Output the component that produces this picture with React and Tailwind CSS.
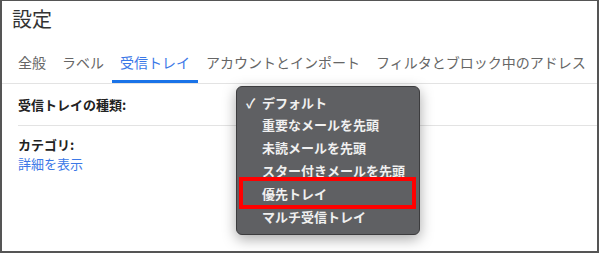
const tabs = ['全般', 'ラベル', '受信トレイ', 'アカウントとインポート', 'フィルタとブロック中のアドレス']

const menuItems = [
  { label: 'デフォルト', checked: true },
  { label: '重要なメールを先頭' },
  { label: '未読メールを先頭' },
  { label: 'スター付きメールを先頭' },
  { label: '優先トレイ', marked: true },
  { label: 'マルチ受信トレイ' },
]

export default function App() {
  return (
    <div
      className="relative w-[599px] h-[253px] overflow-hidden bg-white border-x-2 border-b-2 border-t border-[#555]"
      style={{ fontFamily: '"Noto Sans CJK JP", "Noto Sans", sans-serif' }}
    >
      <h1 className="pl-[10px] pt-[4px] text-[20px] leading-[28px] text-[#333]">設定</h1>

      {/* tab bar */}
      <div className="mt-[14px] flex pl-[8px] border-b border-[#e3e3e3]">
        {tabs.map((t, i) => (
          <div
            key={t}
            className={
              'px-2 pt-[4px] pb-[7px] text-[14px] leading-[22px] border-b-[3px] ' +
              (i === 2 ? 'text-[#3b78e7] border-[#1a73e8]' : 'text-[#666] border-transparent')
            }
          >
            {t}
          </div>
        ))}
      </div>

      <div className="pl-[16px]">
        <div className="flex h-[42px] items-center border-b border-[#e3e3e3] text-[13px] font-bold text-[#222]">
          受信トレイの種類:
        </div>
        <div className="pt-[9px] text-[13px] leading-[19px]">
          <div className="font-bold text-[#222]">カテゴリ:</div>
          <div className="text-[#3b78e7]">詳細を表示</div>
        </div>
      </div>

      {/* dropdown menu */}
      <div className="absolute left-[234px] top-[85px] w-[184px] h-[149px] rounded-[6px] border border-[#3c3c3e] bg-[#5f6063] shadow-[0_4px_14px_rgba(0,0,0,0.35)] pt-[4px]">
        {menuItems.map((m) => (
          <div key={m.label} className="relative flex h-[22.8px] items-center text-[13px] font-bold text-[#f0f0f0]">
            <span className="w-[25px] pl-[9px] text-[13px]">{m.checked ? '✓' : ''}</span>
            <span>{m.label}</span>
            {m.marked && (
              <div className="absolute left-[2px] right-[3px] top-[-5px] bottom-[-4px] border-[4px] border-[#ff0000]" />
            )}
          </div>
        ))}
      </div>
    </div>
  )
}
